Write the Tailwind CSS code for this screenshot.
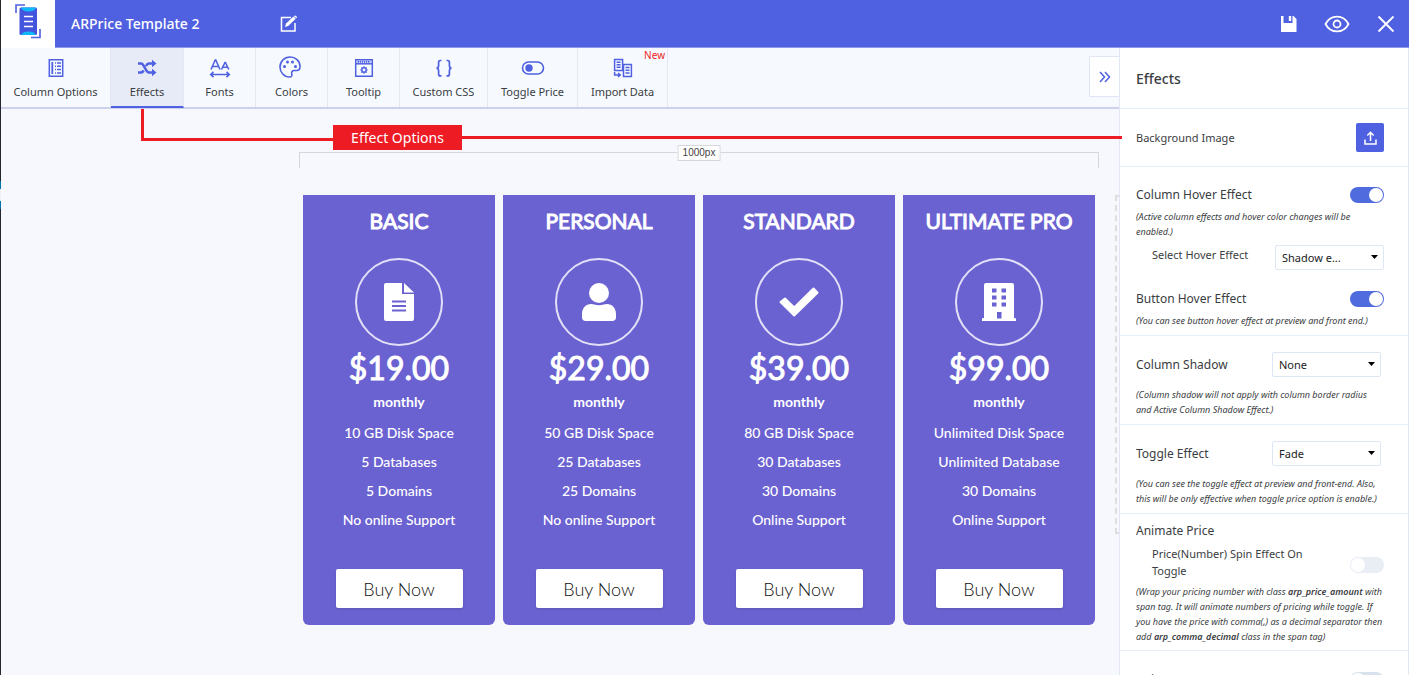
<!DOCTYPE html>
<html lang="en">
<head>
<meta charset="utf-8">
<title>ARPrice Template 2</title>
<meta name="viewport" content="width=device-width, initial-scale=1">
<script src="https://cdn.jsdelivr.net/npm/@tailwindcss/browser@4"></script>
</head>
<body class="relative flex h-screen overflow-hidden bg-[#f7f8fe] font-['Noto_Sans',sans-serif] text-xs text-[#3a3d42]">
<!-- sliver of the admin menu -->
<div class="flex w-px shrink-0 flex-col bg-[#23282d]">
  <span class="mt-[181px] h-2 bg-[#0073aa]"></span><span class="h-3 bg-[#f1f1f1]"></span><span class="h-2 bg-[#0073aa]"></span>
</div>
<div class="flex min-w-0 flex-1 flex-col">
  <header class="flex h-12 shrink-0 items-center border-b border-[#8f9aec] bg-[#4f60e1] text-white">
    <div class="flex h-12 w-[54px] items-start justify-center bg-white">
      <svg class="mt-1" width="26" height="35" viewBox="0 0 26 35">
        <path d="M1 9V1h9M25 25v8.500h-9" fill="none" stroke="#4f60e1" stroke-width="1.600"/>
        <rect x="4.500" y="3.500" width="17.500" height="27.500" rx="1.500" fill="#4455dd"/>
        <path d="M6 3.500h15c-1 3-4 4-7.500 4S7 6.500 6 3.500zM6 31h15c-1-2.500-4-3.500-7.500-3.500S7 28.500 6 31z" fill="#0fb8fb"/>
        <path d="M9 12.500h9M9 17.500h9M9 22.500h9" stroke="#fff" stroke-width="1.600"/>
      </svg>
    </div>
    <h1 class="ml-4 w-52 text-sm font-medium">ARPrice Template 2</h1>
    <button aria-label="Rename template">
      <svg width="20" height="18" viewBox="0 0 20 18" fill="none" stroke="#fff" stroke-width="1.500"><path d="M12 2.500H2.500v13.500h13.500V8"/><path d="M6 12l1-3.500 7.500-7 2.200 2.200-7.500 7.300z" fill="#fff" stroke="none"/><path d="M15.200.8l2-0 .8 1.800-.7.700L15 1.300z" fill="#fff" stroke="none"/></svg>
    </button>
    <div class="mr-3.5 ml-auto flex items-center gap-[27px]">
      <button aria-label="Save"><svg width="17" height="18" viewBox="0 0 17 18" fill="#fff"><path d="M1 1h2.500v7h9V1h1l3 3v13H1z"/><path d="M8.800 1h2.400v5H8.800z"/></svg></button>
      <button aria-label="Preview"><svg width="26" height="18" viewBox="0 0 26 18" fill="none" stroke="#fff" stroke-width="1.800"><path d="M1.500 9C4 4.200 8 1.600 13 1.600S22 4.200 24.500 9C22 13.800 18 16.400 13 16.400S4 13.800 1.500 9z"/><circle cx="13" cy="9" r="3.500"/></svg></button>
      <button aria-label="Close"><svg width="18" height="18" viewBox="0 0 18 18" stroke="#fff" stroke-width="1.900"><path d="M1.500 1.500l15 15M16.500 1.500l-15 15"/></svg></button>
    </div>
  </header>

  <div class="flex min-h-0 flex-1">
    <div class="flex min-w-0 flex-1 flex-col">
      <nav class="flex h-[61px] shrink-0 border-b-2 border-[#cdd1ee] bg-[#f6faff] text-center text-[11px]">
        <button class="flex w-[110px] flex-col items-center border-r border-[#e3e8f2] pt-2.5">
          <svg width="20" height="20" viewBox="0 0 20 20" fill="none" stroke="#4f60e1" stroke-width="1.500"><path d="M3.300 1.700h13.400v16.600H3.300z"/><path d="M6.300 4v12" stroke-width="1.800"/><path d="M9 5h1M9 8.300h1M9 11.600h1M9 15h1M11 5h4M11 8.300h4M11 11.600h4M11 15h4"/></svg>
          <span class="mt-1.5 leading-4">Column Options</span>
        </button>
        <button class="-mb-px flex w-[73px] flex-col items-center border-r border-b-2 border-r-[#e3e8f2] border-b-[#4f60e1] bg-[#e7ebf7] pt-2.5">
          <svg width="20" height="20" viewBox="0 0 20 20" fill="none" stroke="#4f60e1" stroke-width="2.600"><path d="M1 5.500h3c3.500 0 4.500 9 8 9h4M1 14.500h3c1.300 0 2-.8 2.700-2M9 8c.8-1.500 1.600-2.500 3-2.500h4"/><path d="M15 1.800l4.500 3.700L15 9.200zM15 10.800l4.500 3.700-4.500 3.700z" fill="#4f60e1" stroke="none"/></svg>
          <span class="mt-1.5 leading-4">Effects</span>
        </button>
        <button class="flex w-[72px] flex-col items-center border-r border-[#e3e8f2] pt-2.5">
          <svg width="22" height="20" viewBox="0 0 22 20" fill="none" stroke="#4f60e1" stroke-width="1.600"><path d="M2 11.500L6.200 2h.6L11 11.500M3.500 8.500h6M12.500 11.500L16 4.500h.4L19.800 11.500M13.700 9.200h5"/><path d="M2 16.500h18M4.500 13.800L1.700 16.500l2.800 2.700M17.500 13.800l2.800 2.700-2.800 2.700"/></svg>
          <span class="mt-1.5 leading-4">Fonts</span>
        </button>
        <button class="flex w-[72px] flex-col items-center border-r border-[#e3e8f2] pt-2">
          <svg class="mr-1" width="22" height="22" viewBox="0 0 22 22" fill="none" stroke="#4f60e1" stroke-width="1.600"><path d="M11 1C5.500 1 1 5.300 1 11c0 5.500 4.300 10 9.500 10 2 0 2.800-1.300 2.300-3-.5-2 .3-3.500 2.500-3.500h2.500c2 0 3.200-1.500 3.200-4C21 5 16.500 1 11 1z"/><g fill="#4f60e1" stroke="none"><circle cx="5.500" cy="10.500" r="1.500"/><circle cx="8.500" cy="6" r="1.500"/><circle cx="13.500" cy="6" r="1.500"/><circle cx="16.500" cy="10.500" r="1.500"/></g></svg>
          <span class="mt-1.5 leading-4">Colors</span>
        </button>
        <button class="flex w-[72px] flex-col items-center border-r border-[#e3e8f2] pt-2.5">
          <svg width="20" height="20" viewBox="0 0 20 20" fill="none" stroke="#4f60e1" stroke-width="1.500"><path d="M1.700 1.700h16.600v16.600H1.700z"/><path d="M2 5.800h16"/><path d="M3.500 3.700h13" stroke-width="2" stroke-dasharray="1.500 .6"/><circle cx="10" cy="12" r="2.200"/><path d="M10 8.300v1.500M10 14.200v1.500M6.300 12h1.500M12.200 12h1.500M7.400 9.400l1 1M11.600 13.600l1 1M12.600 9.400l-1 1M8.400 13.600l-1 1" stroke-width="1.200"/></svg>
          <span class="mt-1.5 leading-4">Tooltip</span>
        </button>
        <button class="flex w-[88px] flex-col items-center border-r border-[#e3e8f2] pt-2.5">
          <svg width="20" height="20" viewBox="0 0 20 20" fill="none" stroke="#4f60e1" stroke-width="1.700"><path d="M7.500 2.500H6.300C5 2.500 4.600 3.300 4.600 4.500v3c0 1.500-.6 2.500-2 2.700 1.400.2 2 1.200 2 2.700v3c0 1.200.4 2 1.700 2h1.200M12.500 2.500h1.200c1.300 0 1.700.8 1.700 2v3c0 1.500.6 2.500 2 2.700-1.400.2-2 1.200-2 2.700v3c0 1.200-.4 2-1.700 2h-1.200"/></svg>
          <span class="mt-1.5 leading-4">Custom CSS</span>
        </button>
        <button class="flex w-[90px] flex-col items-center border-r border-[#e3e8f2] pt-2.5">
          <svg width="24" height="20" viewBox="0 0 24 20" fill="none" stroke="#4f60e1" stroke-width="1.600"><rect x="1.500" y="4" width="21" height="12" rx="6"/><circle cx="8" cy="10" r="3.700" fill="#4f60e1" stroke="none"/></svg>
          <span class="mt-1.5 leading-4">Toggle Price</span>
        </button>
        <button class="relative flex w-[90px] flex-col items-center border-r border-[#e3e8f2] pt-2.5">
          <span class="absolute -top-px right-0.5 text-[10px] leading-4 text-[#f01c24]">New</span>
          <svg width="20" height="20" viewBox="0 0 20 20" fill="none" stroke="#4f60e1" stroke-width="1.500"><path d="M1.600 1.600h8v10.800h-8zM10.500 6.600h7.900v11.800h-7.900z"/><path d="M3.600 4.300h4M3.600 6.800h4M3.600 9.300h4M12.500 9.500h4M12.500 12.300h4M12.500 15.100h4M1.600 14v3h5M5 15l2.300 2L5 19"/></svg>
          <span class="mt-1.5 leading-4">Import Data</span>
        </button>
        <button aria-label="Collapse panel" class="mt-2 ml-auto flex h-[41px] w-[30px] items-center justify-center rounded-l-xs border border-r-0 border-[#dfe5f5] bg-white">
          <svg width="12" height="12" viewBox="0 0 12 12" fill="none" stroke="#4f60e1" stroke-width="1.500"><path d="M1 1l4.500 5L1 11M6 1l4.500 5L6 11"/></svg>
        </button>
      </nav>

      <main class="relative flex flex-1 items-start justify-end overflow-hidden pt-[37px]">
        <div class="w-[800px] shrink-0">
          <!-- width ruler -->
          <div class="relative mt-1.5 h-4 border border-b-0 border-[#d5d7dc]">
            <span class="absolute -top-2 left-1/2 -translate-x-1/2 border border-[#d5d7dc] bg-white px-1 font-['Liberation_Sans',sans-serif] text-[10px] leading-[14px] text-[#444]">1000px</span>
          </div>
          <div id="plans" class="mt-[27px] grid grid-cols-4 gap-2 px-1 font-['Lato',sans-serif] text-sm text-white"></div>
        </div>
        <div class="mt-[49px] ml-4 h-[339px] w-1 shrink-0 border-2 border-r-0 border-dashed border-[#dcdee2]"></div>
      </main>
    </div>

    <aside class="w-[290px] shrink-0 overflow-hidden border-x border-[#e1e8f4] bg-white text-xs leading-5">
      <h2 class="border-b border-[#e6eef7] px-4 pt-[21px] pb-[19px] text-sm leading-5 font-medium">Effects</h2>
      <section class="flex items-center justify-between border-b border-[#e6eef7] py-3.5 pr-6 pl-4">
        <span class="text-[11px]">Background Image</span>
        <button aria-label="Upload background image" class="flex h-[29px] w-7 items-center justify-center rounded-xs bg-[#4f60e1]">
          <svg width="13" height="14" viewBox="0 0 13 14" fill="none" stroke="#fff" stroke-width="1.500"><path d="M1 8.500V13h11V8.500M6.500 10V1.500M3.300 4.500l3.200-3.200 3.200 3.200"/></svg>
        </button>
      </section>
      <section class="border-b border-[#e6eef7] pt-[18px] pr-6 pb-[7px] pl-4">
        <div class="flex items-center justify-between">
          <label for="colhover">Column Hover Effect</label>
          <input id="colhover" type="checkbox" checked class="h-4 w-[34px] appearance-none rounded-full bg-[#e9edf4] p-px before:block before:size-3.5 before:rounded-full before:bg-white checked:bg-[#4f6bde] checked:before:ml-auto">
        </div>
        <p class="mt-1 text-[9px] leading-[15px] whitespace-nowrap italic">(Active column effects and hover color changes will be<br>enabled.)</p>
        <div class="mt-1.5 flex justify-between pl-4">
          <label for="hoversel" class="text-[11px]">Select Hover Effect</label>
          <div class="relative">
            <select id="hoversel" class="block h-[25px] w-[109px] appearance-none rounded-xs border border-[#dde7f3] bg-white pr-5 pl-1.5 text-[11px] text-[#222]"><option>Shadow e...</option></select>
            <svg class="pointer-events-none absolute top-2.5 right-1.5" width="7" height="4" viewBox="0 0 7 4"><path d="M0 0h7L3.500 4z"/></svg>
          </div>
        </div>
        <div class="mt-[19px] flex items-center justify-between">
          <label for="btnhover">Button Hover Effect</label>
          <input id="btnhover" type="checkbox" checked class="h-4 w-[34px] appearance-none rounded-full bg-[#e9edf4] p-px before:block before:size-3.5 before:rounded-full before:bg-white checked:bg-[#4f6bde] checked:before:ml-auto">
        </div>
        <p class="mt-1 text-[9px] leading-[15px] whitespace-nowrap italic">(You can see button hover effect at preview and front end.)</p>
      </section>
      <section class="border-b border-[#e6eef7] pt-4 pb-[7px] pl-4">
        <div class="flex items-center justify-between pr-[27px]">
          <label for="shadow">Column Shadow</label>
          <div class="relative">
            <select id="shadow" class="block h-[25px] w-[109px] appearance-none rounded-xs border border-[#dde7f3] bg-white pr-5 pl-1.5 text-[11px] text-[#222]"><option>None</option></select>
            <svg class="pointer-events-none absolute top-2.5 right-1.5" width="7" height="4" viewBox="0 0 7 4"><path d="M0 0h7L3.500 4z"/></svg>
          </div>
        </div>
        <p class="mt-2.5 text-[9px] leading-[15px] whitespace-nowrap italic">(Column shadow will not apply with column border radius<br>and Active Column Shadow Effect.)</p>
      </section>
      <section class="border-b border-[#e6eef7] pt-4 pb-[7px] pl-4">
        <div class="flex items-center justify-between pr-[27px]">
          <label for="toggle">Toggle Effect</label>
          <div class="relative">
            <select id="toggle" class="block h-[25px] w-[109px] appearance-none rounded-xs border border-[#dde7f3] bg-white pr-5 pl-1.5 text-[11px] text-[#222]"><option>Fade</option></select>
            <svg class="pointer-events-none absolute top-2.5 right-1.5" width="7" height="4" viewBox="0 0 7 4"><path d="M0 0h7L3.500 4z"/></svg>
          </div>
        </div>
        <p class="mt-2.5 text-[9px] leading-[15px] whitespace-nowrap italic">(You can see the toggle effect at preview and front-end. Also,<br>this will be only effective when toggle price option is enable.)</p>
      </section>
      <section class="border-b border-[#e6eef7] pt-[7px] pb-1.5 pl-4">
        <h3>Animate Price</h3>
        <div class="mt-1 flex items-end justify-between pr-6 pl-4 text-[11px] leading-[17px]">
          <label for="spin">Price(Number) Spin Effect On<br>Toggle</label>
          <input id="spin" type="checkbox" class="mb-1.5 h-4 w-[34px] appearance-none rounded-full bg-[#e9edf4] p-px before:block before:size-3.5 before:rounded-full before:bg-white checked:bg-[#4f6bde] checked:before:ml-auto">
        </div>
        <p class="mt-[5px] text-[9px] leading-[15px] whitespace-nowrap italic">(Wrap your pricing number with class <b class="font-semibold">arp_price_amount</b> with<br>span tag. It will animate numbers of pricing while toggle. If<br>you have the price with comma(,) as a decimal separator then<br>add <b class="font-semibold">arp_comma_decimal</b> class in the span tag)</p>
      </section>
      <section class="flex items-center justify-between pt-[19px] pr-6 pl-4">
        <label for="anicon">Animate Icon</label>
        <input id="anicon" type="checkbox" class="h-4 w-[34px] appearance-none rounded-full bg-[#d9e1ec] p-px before:block before:size-3.5 before:rounded-full before:bg-white checked:bg-[#4f6bde] checked:before:ml-auto">
      </section>
    </aside>
  </div>
</div>

<!-- callout linking the Effects tab to its panel -->
<div class="pointer-events-none absolute top-[109px] left-[141px] h-8 w-48 border-b-3 border-l-3 border-[#ed1c24]"></div>
<div class="pointer-events-none absolute top-[125px] right-[287px] left-[333px] flex items-center">
  <span class="w-[129px] bg-[#ed1c24] text-center text-sm leading-[25px] text-white">Effect Options</span>
  <span class="h-[3px] flex-1 bg-[#ed1c24]"></span>
</div>

<script>
const icons = {
  file: '<svg width="30" height="40" viewBox="0 0 30 40" fill="#fff"><path d="M2 1h16v11h12v25a2 2 0 0 1-2 2H2a2 2 0 0 1-2-2V3a2 2 0 0 1 2-2z"/><path d="M20 1l10 9.500H20z"/><path d="M8 19.500h14M8 24h14M8 28.500h14" stroke="#6b62d2" stroke-width="2"/></svg>',
  user: '<svg width="34" height="40" viewBox="0 0 34 40" fill="#fff"><circle cx="17" cy="11" r="10"/><path d="M0 32c0-6 4-10 9-10 2.500 0 4 1.200 8 1.200S22.500 22 25 22c5 0 9 4 9 10v3.500c0 2.200-1.500 3.500-3.500 3.500h-27C1.500 39 0 37.700 0 35.500z"/></svg>',
  check: '<svg width="40" height="40" viewBox="0 0 40 40" fill="#fff" stroke="#fff" stroke-width="2" stroke-linejoin="round"><path d="M1.500 20L6 16.500 15.200 25.500 34.500 6.500 38.500 10.800 15.200 33.500z"/></svg>',
  building: '<svg width="34" height="40" viewBox="0 0 34 40"><path d="M4 1h26a2 2 0 0 1 2 2v33h1a1 1 0 0 1 1 1v2H0v-2a1 1 0 0 1 1-1h1V3a2 2 0 0 1 2-2z" fill="#fff"/><path d="M10 6.500h4.500v4H10zM19.500 6.500H24v4h-4.500zM10 13.500h4.500v4H10zM19.500 13.500H24v4h-4.500zM10 20.500h4.500v4H10zM19.500 20.500H24v4h-4.500zM15 30h4.500v6.500H15z" fill="#6b62d2"/></svg>'
};
const plans = [
  ['BASIC', 'file', '$19.00', ['10 GB Disk Space', '5 Databases', '5 Domains', 'No online Support']],
  ['PERSONAL', 'user', '$29.00', ['50 GB Disk Space', '25 Databases', '25 Domains', 'No online Support']],
  ['STANDARD', 'check', '$39.00', ['80 GB Disk Space', '30 Databases', '30 Domains', 'Online Support']],
  ['ULTIMATE PRO', 'building', '$99.00', ['Unlimited Disk Space', 'Unlimited Database', '30 Domains', 'Online Support']]
];
document.getElementById('plans').innerHTML = plans.map(([name, icon, price, items]) => `
  <article class="flex flex-col items-center rounded-b-md bg-[#6b62d2] pt-3 pb-[17px]">
    <h3 class="text-[21px] leading-7 [-webkit-text-stroke:1px_white]">${name}</h3>
    <div class="mt-[23px] flex size-[88px] items-center justify-center rounded-full border-2 border-white/80">${icons[icon]}</div>
    <div class="mt-0.5 text-[32px] leading-10 [-webkit-text-stroke:1px_white]">${price}</div>
    <div class="mt-1 text-sm leading-5 font-bold">monthly</div>
    <ul class="mt-1.5 text-center font-medium">${items.map(t => `<li class="py-[5px] leading-[19px]">${t}</li>`).join('')}</ul>
    <button class="mt-[35px] h-[39px] w-[127px] rounded-xs bg-white text-lg font-light text-[#111] shadow">Buy Now</button>
  </article>`).join('');
</script>
</body>
</html>
